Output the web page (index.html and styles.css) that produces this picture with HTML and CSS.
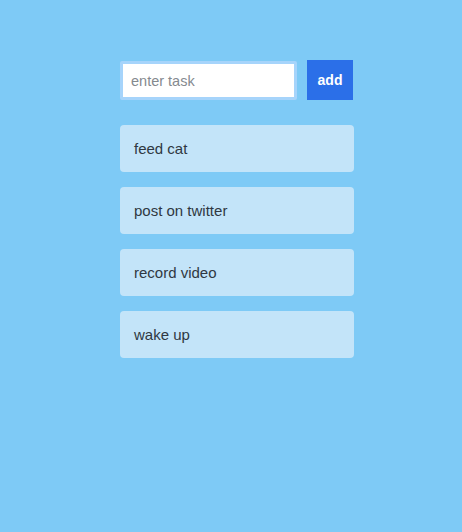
FILE: index.html
```html
<!DOCTYPE html>
<html lang="en">
<head>
<meta charset="utf-8">
<title>Tasks</title>
<link rel="stylesheet" href="styles.css">
</head>
<body>
<main class="app">
  <form class="entry">
    <input class="task-input" type="text" placeholder="enter task">
    <button class="add-btn" type="button">add</button>
  </form>
  <ul class="tasks">
    <li class="task">feed cat</li>
    <li class="task">post on twitter</li>
    <li class="task">record video</li>
    <li class="task">wake up</li>
  </ul>
</main>
</body>
</html>
```
FILE: styles.css
```css
html, body {
  margin: 0;
  padding: 0;
  height: 100%;
}
body {
  background: #7ecaf6;
  font-family: "Liberation Sans", Arial, sans-serif;
  color: #2e3a44;
}
.app {
  width: 234px;
  margin: 0 0 0 120px;
  padding-top: 60px;
}
.entry {
  display: flex;
  align-items: flex-start;
  gap: 10px;
  margin: 0;
}
.task-input {
  box-sizing: border-box;
  width: 177px;
  height: 39px;
  margin-top: 1px;
  border: 3px solid #a6d4fb;
  border-radius: 2px;
  background: #fff;
  padding: 0 0 0 8px;
  font-family: "Liberation Sans", Arial, sans-serif;
  font-size: 14.5px;
  color: #333;
  outline: none;
}
.task-input::placeholder {
  color: #858a8f;
}
.add-btn {
  box-sizing: border-box;
  width: 46px;
  height: 40px;
  border: none;
  border-radius: 0;
  background: #2b6fe8;
  color: #fff;
  font-family: "Liberation Sans", Arial, sans-serif;
  font-weight: bold;
  font-size: 14px;
  padding: 0;
}
.tasks {
  list-style: none;
  margin: 25px 0 0;
  padding: 0;
  display: flex;
  flex-direction: column;
  gap: 15px;
}
.task {
  box-sizing: border-box;
  height: 47px;
  display: flex;
  align-items: center;
  padding-left: 14px;
  background: #c3e4f9;
  border-radius: 4px;
  font-size: 15px;
  color: #2f3842;
}
```
